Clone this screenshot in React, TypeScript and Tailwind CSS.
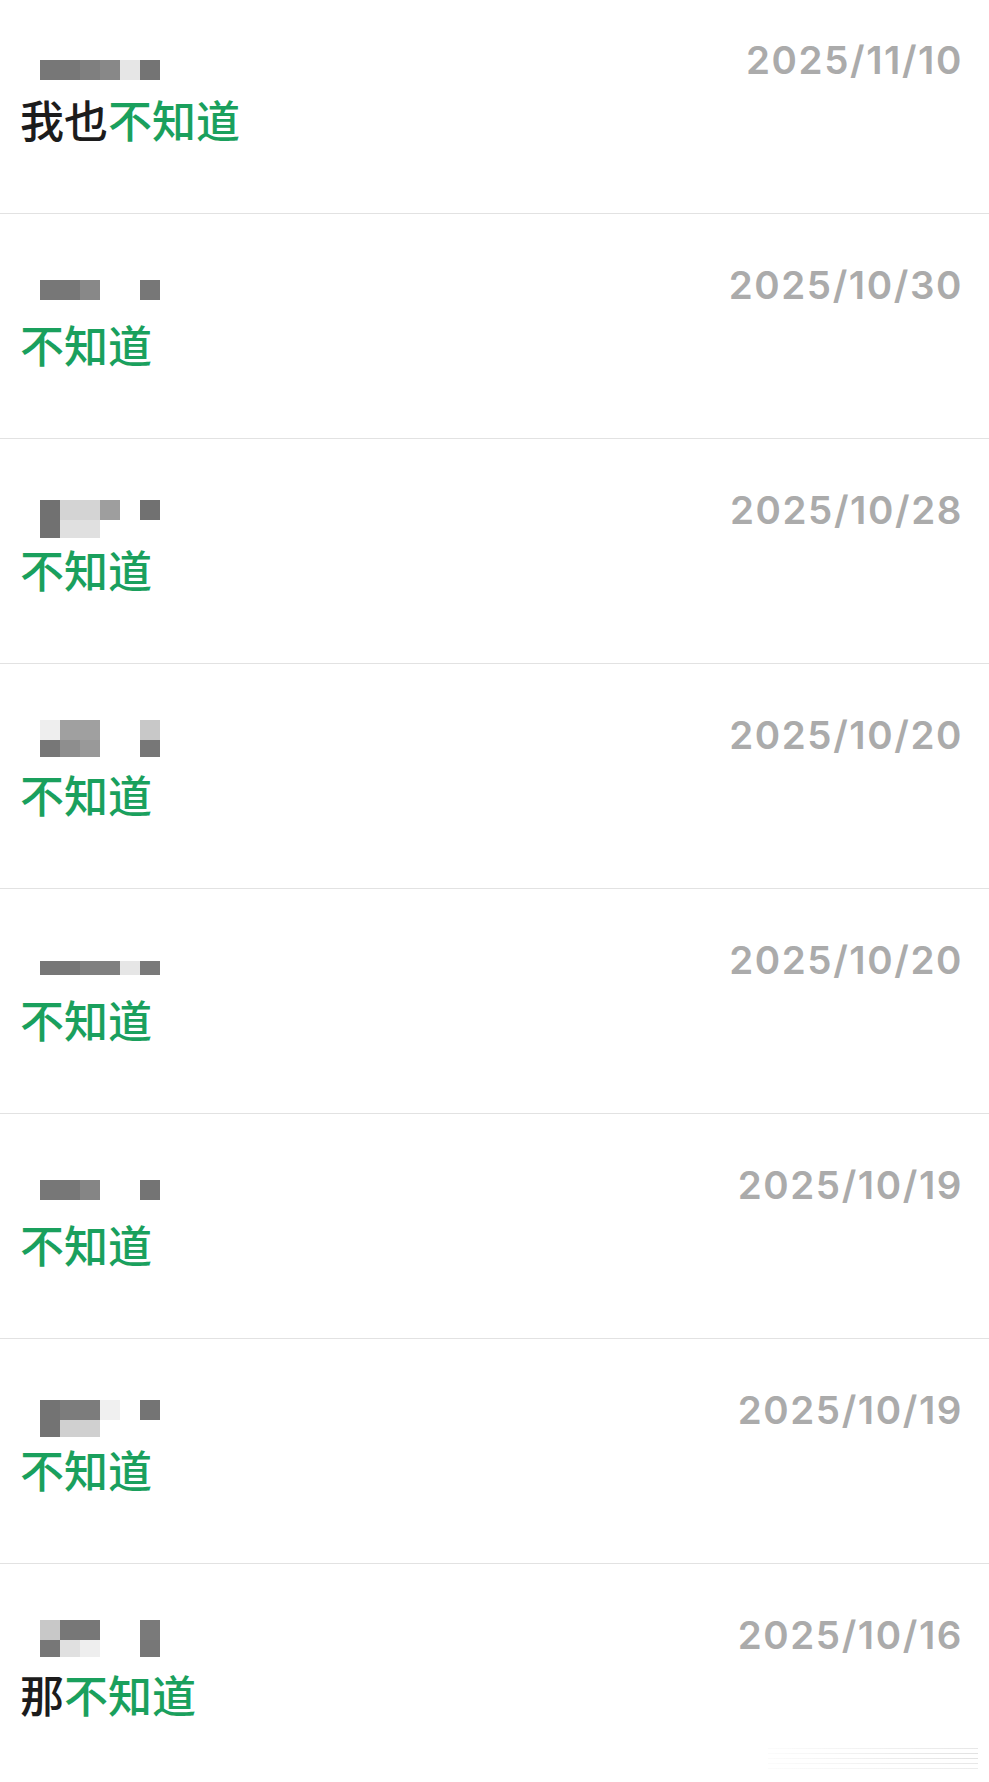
import React from "react";

type Block = string | null;
type MRow = { h: string; blocks: Block[] };
type Item = {
  pt: string;
  mosaic: MRow[];
  prefix: string;
  date: string;
};

const items: Item[] = [
  {
    pt: "pt-[71px]",
    mosaic: [{ h: "h-[20px]", blocks: ["#777777", "#777777", "#7f7f7f", "#888888", "#e6e6e6", "#747474"] }],
    prefix: "我也",
    date: "2025/11/10",
  },
  {
    pt: "pt-[66px]",
    mosaic: [{ h: "h-[20px]", blocks: ["#777777", "#777777", "#888888", null, null, "#777777"] }],
    prefix: "",
    date: "2025/10/30",
  },
  {
    pt: "pt-[61px]",
    mosaic: [
      { h: "h-[20px]", blocks: ["#717171", "#d4d4d4", "#d4d4d4", "#9e9e9e", null, "#717171"] },
      { h: "h-[18px]", blocks: ["#717171", "#e0e0e0", "#e0e0e0", null, null, null] },
    ],
    prefix: "",
    date: "2025/10/28",
  },
  {
    pt: "pt-[56px]",
    mosaic: [
      { h: "h-[20px]", blocks: ["#eeeeee", "#a0a0a0", "#a0a0a0", null, null, "#c8c8c8"] },
      { h: "h-[17px]", blocks: ["#777777", "#8e8e8e", "#999999", null, null, "#777777"] },
    ],
    prefix: "",
    date: "2025/10/20",
  },
  {
    pt: "pt-[72px]",
    mosaic: [{ h: "h-[14px]", blocks: ["#777777", "#777777", "#808080", "#808080", "#e6e6e6", "#7a7a7a"] }],
    prefix: "",
    date: "2025/10/20",
  },
  {
    pt: "pt-[66px]",
    mosaic: [{ h: "h-[20px]", blocks: ["#777777", "#777777", "#858585", null, null, "#747474"] }],
    prefix: "",
    date: "2025/10/19",
  },
  {
    pt: "pt-[61px]",
    mosaic: [
      { h: "h-[20px]", blocks: ["#737373", "#7c7c7c", "#7c7c7c", "#f0f0f0", null, "#747474"] },
      { h: "h-[17px]", blocks: ["#737373", "#d0d0d0", "#d0d0d0", null, null, null] },
    ],
    prefix: "",
    date: "2025/10/19",
  },
  {
    pt: "pt-[56px]",
    mosaic: [
      { h: "h-[20px]", blocks: ["#c8c8c8", "#777777", "#777777", null, null, "#7a7a7a"] },
      { h: "h-[17px]", blocks: ["#777777", "#e0e0e0", "#eeeeee", null, null, "#777777"] },
    ],
    prefix: "那",
    date: "2025/10/16",
  },
];

const cjk = "font-['PingFang_SC','Noto_Sans_CJK_SC',sans-serif]";

function Mosaic({ rows }: { rows: MRow[] }) {
  return (
    <div className="flex flex-col">
      {rows.map((r, i) => (
        <div key={i} className={`flex ${r.h}`}>
          {r.blocks.map((c, j) => (
            <div
              key={j}
              className="w-[20px] h-full"
              style={{ backgroundColor: c ?? "transparent" }}
            />
          ))}
        </div>
      ))}
    </div>
  );
}

function Row({ item, last }: { item: Item; last: boolean }) {
  return (
    <div
      className={`relative flex justify-between h-[225px] ${
        last ? "" : "border-b border-[#e2e2e2]"
      }`}
    >
      <div className="flex flex-col pl-[20px]">
        <div className={`h-[108px] pl-[20px] ${item.pt}`}>
          <Mosaic rows={item.mosaic} />
        </div>
        <div className={`${cjk} text-[44px] leading-[44px] font-medium whitespace-nowrap`}>
          {item.prefix && <span className="text-[#1c1c1c]">{item.prefix}</span>}
          <span className="text-[#1aa05d]">不知道</span>
        </div>
      </div>
      <div className="pr-[26px] pt-[51px]">
        <div className="font-['Inter','Noto_Sans',sans-serif] text-[38.5px] leading-[40px] font-semibold text-[#ababab] tracking-[1.6px]">
          {item.date}
        </div>
      </div>
      {last && (
        <div className="absolute left-[768px] top-[184px] w-[210px] flex flex-col gap-[4px] opacity-60">
          <div className="h-px bg-gradient-to-r from-[#fafafa] to-[#d8d8d8]" />
          <div className="h-px bg-gradient-to-r from-[#fafafa] to-[#d0d0d0]" />
          <div className="h-px bg-gradient-to-r from-[#fafafa] to-[#d0d0d0]" />
          <div className="h-px bg-gradient-to-r from-[#fafafa] to-[#d8d8d8]" />
          <div className="h-px bg-gradient-to-r from-[#fafafa] to-[#e0e0e0]" />
        </div>
      )}
    </div>
  );
}

export default function App() {
  return (
    <div className="w-[989px] h-[1782px] overflow-hidden bg-white">
      <div className="-mt-[11px]">
        {items.map((it, i) => (
          <Row key={i} item={it} last={i === items.length - 1} />
        ))}
      </div>
    </div>
  );
}
